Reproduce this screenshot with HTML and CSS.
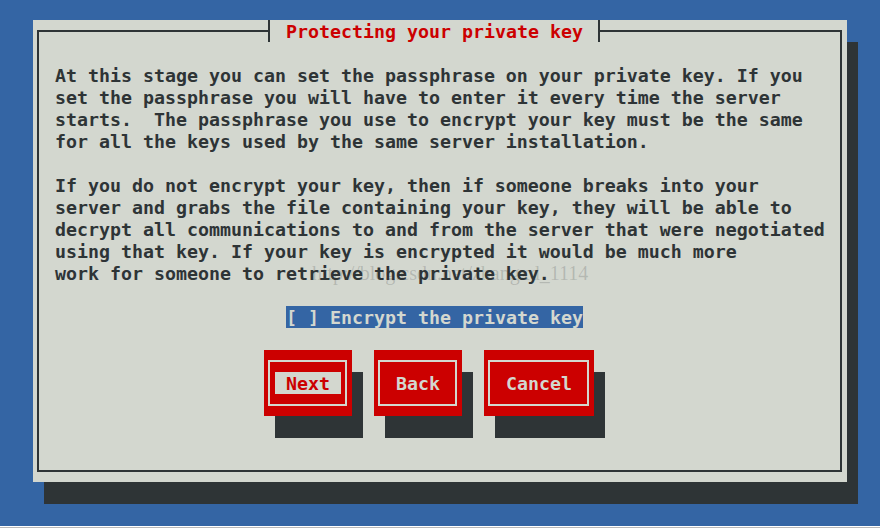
FILE: index.html
```html
<!DOCTYPE html>
<html>
<head>
<meta charset="utf-8">
<link rel="stylesheet" href="styles.css">
</head>
<body>
<div class="screen">
  <div class="dialog">
    <div class="title">Protecting your private key</div>
    <div class="frame">
<pre class="body">At this stage you can set the passphrase on your private key. If you
set the passphrase you will have to enter it every time the server
starts.  The passphrase you use to encrypt your key must be the same
for all the keys used by the same server installation.

If you do not encrypt your key, then if someone breaks into your
server and grabs the file containing your key, they will be able to
decrypt all communications to and from the server that were negotiated
using that key. If your key is encrypted it would be much more
work for someone to retrieve the private key.</pre>
      <div class="check-row"><span class="check">[ ] Encrypt the private key</span></div>
      <div class="buttons">
        <div class="btn w8"><div class="btn-in"><span class="lbl focus"> Next </span></div></div>
        <div class="btn w8"><div class="btn-in"><span class="lbl"> Back </span></div></div>
        <div class="btn w10"><div class="btn-in"><span class="lbl"> Cancel </span></div></div>
      </div>
    </div>
  </div>
  <div class="watermark">http://blog.csdn.net/zhangxd_1114</div>
</div>
<div class="line-white"></div>
<div class="line-gray"></div>
</body>
</html>
```

FILE: styles.css
```css
html, body {
  margin: 0;
  padding: 0;
  background: #3465a4;
}
.screen {
  position: relative;
  height: 526px;
  box-sizing: border-box;
  padding: 20px 0 0 33px;
  background: #3465a4;
  font-family: "DejaVu Sans Mono", monospace;
  font-weight: bold;
  font-size: 18.27px;
  line-height: 22px;
  color: #2e3436;
}
.line-white { height: 1px; background: #ffffff; }
.line-gray { height: 1px; background: #b9b9b9; }
.dialog {
  position: relative;
  width: 814px;
  height: 462px;
  box-sizing: border-box;
  padding: 10px 5px 10px 4px;
  background: #d3d7cf;
  box-shadow: 11px 22px 0 #2e3436;
  display: flex;
}
.frame {
  flex: 1;
  border: 2px solid #2e3436;
  padding: 32px 0 0 16px;
}
.title {
  position: absolute;
  left: 235px;
  top: 0;
  width: 332px;
  height: 22px;
  box-sizing: border-box;
  border-left: 2px solid #2e3436;
  border-right: 2px solid #2e3436;
  background: #d3d7cf;
  color: #cc0000;
  padding-left: 16px;
  padding-top: 1px;
  white-space: pre;
}
.body {
  margin: 0;
  padding-top: 1px;
  height: 219px;
  font: inherit;
  white-space: pre;
}
.check-row {
  margin-top: 22px;
  padding-left: 231px;
  height: 22px;
}
.check {
  display: inline-block;
  height: 22px;
  box-sizing: border-box;
  padding-top: 1px;
  line-height: 21px;
  background: #3465a4;
  color: #d3d7cf;
  white-space: pre;
}
.buttons {
  margin-top: 22px;
  padding-left: 209px;
  display: flex;
  gap: 22px;
}
.btn {
  height: 66px;
  box-sizing: border-box;
  background: #cc0000;
  box-shadow: 11px 22px 0 #2e3436;
  padding: 10px 5px 10px 4px;
  display: flex;
}
.w8 { width: 88px; }
.w10 { width: 110px; }
.btn-in {
  flex: 1;
  border: 2px solid #d3d7cf;
  padding: 10px 0 0 5px;
}
.lbl {
  display: inline-block;
  height: 22px;
  box-sizing: border-box;
  padding-top: 1px;
  line-height: 21px;
  white-space: pre;
  color: #d3d7cf;
}
.lbl.focus {
  background: #d3d7cf;
  color: #cc0000;
}
.watermark {
  position: absolute;
  left: 312px;
  top: 261px;
  font-family: "Liberation Serif", serif;
  font-weight: normal;
  font-size: 20px;
  line-height: 24px;
  color: rgba(46, 52, 54, 0.2);
  pointer-events: none;
}
```
